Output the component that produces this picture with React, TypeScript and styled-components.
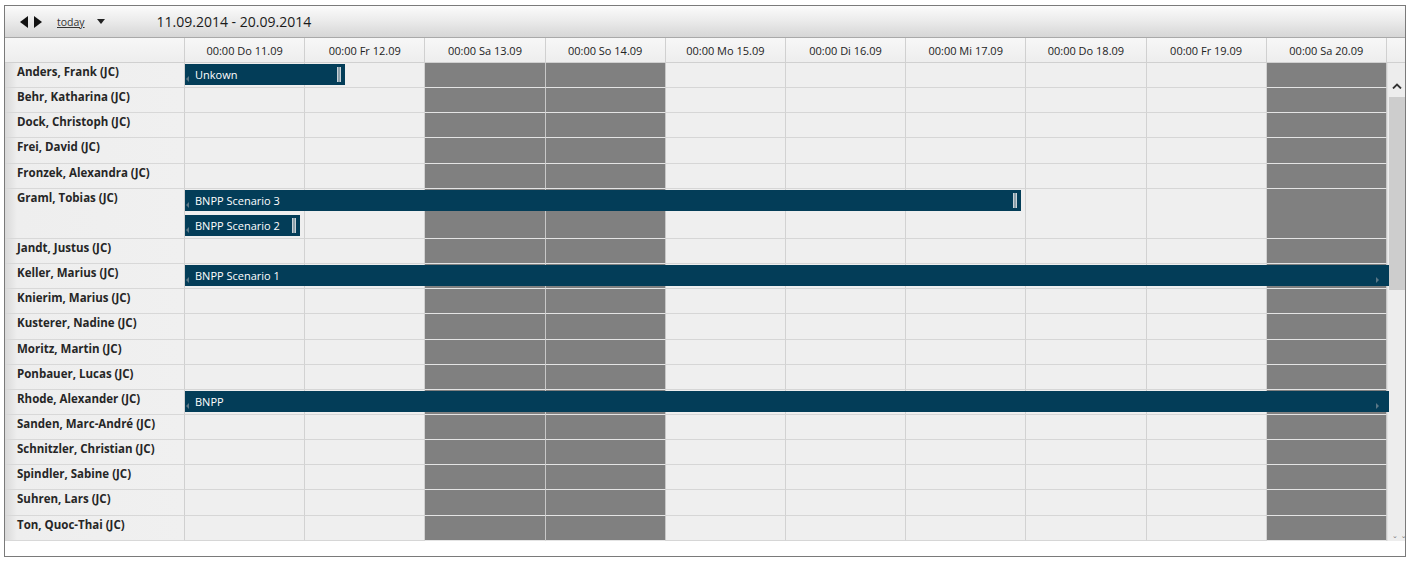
import styled, { createGlobalStyle } from 'styled-components'

const GlobalStyle = createGlobalStyle`
  html, body {
    margin: 0;
    padding: 0;
    background: #ffffff;
  }
  body {
    font-family: "Open Sans", "Noto Sans", "DejaVu Sans", sans-serif;
    color: #1e1e1e;
  }
`

const DAYS = [
  { label: '00:00 Do 11.09', weekend: false },
  { label: '00:00 Fr 12.09', weekend: false },
  { label: '00:00 Sa 13.09', weekend: true },
  { label: '00:00 So 14.09', weekend: true },
  { label: '00:00 Mo 15.09', weekend: false },
  { label: '00:00 Di 16.09', weekend: false },
  { label: '00:00 Mi 17.09', weekend: false },
  { label: '00:00 Do 18.09', weekend: false },
  { label: '00:00 Fr 19.09', weekend: false },
  { label: '00:00 Sa 20.09', weekend: true },
]

const DAY_W = 120.2
const ROW_H = 25.15

type Task = { title: string; start: number; days: number; lane: number }
type Person = { name: string; lanes: number; tasks: Task[] }

const PEOPLE: Person[] = [
  { name: 'Anders, Frank (JC)', lanes: 1, tasks: [{ title: 'Unkown', start: 0, days: 1.33, lane: 0 }] },
  { name: 'Behr, Katharina (JC)', lanes: 1, tasks: [] },
  { name: 'Dock, Christoph (JC)', lanes: 1, tasks: [] },
  { name: 'Frei, David (JC)', lanes: 1, tasks: [] },
  { name: 'Fronzek, Alexandra (JC)', lanes: 1, tasks: [] },
  {
    name: 'Graml, Tobias (JC)',
    lanes: 2,
    tasks: [
      { title: 'BNPP Scenario 3', start: 0, days: 6.955, lane: 0 },
      { title: 'BNPP Scenario 2', start: 0, days: 0.96, lane: 1 },
    ],
  },
  { name: 'Jandt, Justus (JC)', lanes: 1, tasks: [] },
  { name: 'Keller, Marius (JC)', lanes: 1, tasks: [{ title: 'BNPP Scenario 1', start: 0, days: 99, lane: 0 }] },
  { name: 'Knierim, Marius (JC)', lanes: 1, tasks: [] },
  { name: 'Kusterer, Nadine (JC)', lanes: 1, tasks: [] },
  { name: 'Moritz, Martin (JC)', lanes: 1, tasks: [] },
  { name: 'Ponbauer, Lucas (JC)', lanes: 1, tasks: [] },
  { name: 'Rhode, Alexander (JC)', lanes: 1, tasks: [{ title: 'BNPP', start: 0, days: 99, lane: 0 }] },
  { name: 'Sanden, Marc-André (JC)', lanes: 1, tasks: [] },
  { name: 'Schnitzler, Christian (JC)', lanes: 1, tasks: [] },
  { name: 'Spindler, Sabine (JC)', lanes: 1, tasks: [] },
  { name: 'Suhren, Lars (JC)', lanes: 1, tasks: [] },
  { name: 'Ton, Quoc-Thai (JC)', lanes: 1, tasks: [] },
]

const Page = styled.div`
  padding: 5px 6px 0 4px;
`

const Frame = styled.div`
  width: 1400px;
  height: 550px;
  border: 1px solid #7a7a7a;
  display: flex;
  flex-direction: column;
  background: #ffffff;
`

const Toolbar = styled.div`
  flex: none;
  display: flex;
  align-items: center;
  background: linear-gradient(to bottom, #fbfbfb 0%, #ececec 45%, #d6d6d6 100%);
  border-bottom: 1px solid #a9a9a9;
  padding-left: 15px;
  box-sizing: border-box;
  height: 32px;
`

const NavArrows = styled.div`
  display: flex;
  gap: 4px;
  align-items: center;
  width: 37px;
`

const TodayLink = styled.span`
  font-size: 10.5px;
  color: #333;
  text-decoration: underline;
  margin-right: 12px;
`

const Caret = styled.svg`
  margin-right: 52px;
`

const RangeTitle = styled.span`
  font-size: 14px;
  color: #1a1a1a;
`

const Body = styled.div`
  display: flex;
  flex: none;
`

const Rows = styled.div`
  width: ${180 + DAY_W * 10}px;
  display: flex;
  flex-direction: column;
`

const Row = styled.div<{ $lanes: number }>`
  position: relative;
  display: grid;
  grid-template-columns: 180px repeat(10, ${DAY_W}px);
  height: ${(p) => ROW_H * p.$lanes}px;
`

const HeaderRow = styled.div`
  display: grid;
  grid-template-columns: 180px repeat(10, ${DAY_W}px);
  height: 25px;
  background: linear-gradient(to bottom, #f7f7f7, #ededed);
`

const HeaderCorner = styled.div`
  border-right: 1px solid #d0d0d0;
  border-bottom: 1px solid #d0d0d0;
`

const HeaderCell = styled.div`
  border-right: 1px solid #d0d0d0;
  border-bottom: 1px solid #d0d0d0;
  font-size: 11px;
  color: #222;
  display: flex;
  align-items: center;
  justify-content: center;
  box-sizing: border-box;
`

const NameCell = styled.div`
  background: linear-gradient(to right, #d9d9d9 0px, #eeeeee 12px, #f0f0f0 100%);
  border-right: 1px solid #d0d0d0;
  border-bottom: 1px solid #d8d8d8;
  font-size: 11.5px;
  font-weight: 700;
  color: #262626;
  padding: 1px 0 0 12px;
  box-sizing: border-box;
  white-space: nowrap;
`

const DayCell = styled.div<{ $weekend: boolean }>`
  background: ${(p) => (p.$weekend ? '#808080' : '#efefef')};
  border-right: 1px solid ${(p) => (p.$weekend ? '#c8c8c8' : '#d2d2d2')};
  border-bottom: 1px solid ${(p) => (p.$weekend ? '#e4e4e4' : '#d6d6d6')};
  box-sizing: border-box;
`

const Bar = styled.div`
  position: absolute;
  height: 21px;
  background: #033d58;
  color: #ffffff;
  font-size: 11px;
  display: flex;
  align-items: center;
  padding-left: 10px;
  box-sizing: border-box;
  white-space: nowrap;
  overflow: hidden;
  z-index: 1;
`

const LeftTick = styled.span`
  position: absolute;
  left: 1px;
  bottom: 3px;
  width: 0;
  height: 0;
  border-top: 3px solid transparent;
  border-bottom: 3px solid transparent;
  border-right: 3px solid #5b7786;
`

const RightTick = styled.span`
  position: absolute;
  right: 10px;
  bottom: 3px;
  width: 0;
  height: 0;
  border-top: 3px solid transparent;
  border-bottom: 3px solid transparent;
  border-left: 3px solid #5b7786;
`

const Grip = styled.span`
  position: absolute;
  right: 4px;
  top: 3px;
  width: 2px;
  height: 15px;
  border-left: 1px solid #c8d2d8;
  border-right: 1px solid #c8d2d8;
  background: #8da0aa;
`

const ScrollCol = styled.div`
  flex: 1;
  display: flex;
  flex-direction: column;
`

const ScrollHead = styled.div`
  height: 25px;
  background: linear-gradient(to bottom, #f7f7f7, #ededed);
  border-bottom: 1px solid #d0d0d0;
  box-sizing: border-box;
`

const ScrollTrack = styled.div`
  flex: 1;
  background: #ededed;
  display: flex;
  flex-direction: column;
  align-items: center;
  border-left: 1px solid #e2e2e2;
  position: relative;
`

const ScrollBtn = styled.div`
  height: 34px;
  width: 100%;
  display: flex;
  align-items: center;
  justify-content: center;
  padding-top: 12px;
  box-sizing: border-box;
`

const Thumb = styled.div`
  width: 16px;
  height: 193px;
  background: #cdcdcd;
`

const BottomGrip = styled.span`
  position: absolute;
  bottom: 1px;
  left: 4px;
  font-size: 7px;
  color: #777;
  letter-spacing: 3px;
`

const totalLanes = PEOPLE.reduce((s, p) => s + p.lanes, 0)

function BarView({ task }: { task: Task }) {
  const left = 180 + task.start * DAY_W
  const maxW = 180 + DAY_W * 10 + 2 - left
  const rawW = task.days * DAY_W
  const open = rawW > maxW
  const width = open ? maxW : rawW
  return (
    <Bar style={{ left, width, top: 1 + task.lane * ROW_H }}>
      <LeftTick />
      {task.title}
      {open ? <RightTick /> : <Grip />}
    </Bar>
  )
}

export default function App() {
  return (
    <Page>
      <GlobalStyle />
      <Frame>
        <Toolbar>
          <NavArrows>
            <svg width="9" height="12" viewBox="0 0 9 12">
              <path d="M8 0 L8 12 L0 6 Z" fill="#111" />
            </svg>
            <svg width="9" height="12" viewBox="0 0 9 12">
              <path d="M1 0 L1 12 L9 6 Z" fill="#111" />
            </svg>
          </NavArrows>
          <TodayLink>today</TodayLink>
          <Caret width="8" height="5" viewBox="0 0 8 5">
            <path d="M0 0 L8 0 L4 5 Z" fill="#222" />
          </Caret>
          <RangeTitle>11.09.2014 - 20.09.2014</RangeTitle>
        </Toolbar>
        <Body>
          <Rows>
            <HeaderRow>
              <HeaderCorner />
              {DAYS.map((d) => (
                <HeaderCell key={d.label}>{d.label}</HeaderCell>
              ))}
            </HeaderRow>
            {PEOPLE.map((p) => (
              <Row key={p.name} $lanes={p.lanes}>
                <NameCell>{p.name}</NameCell>
                {DAYS.map((d) => (
                  <DayCell key={d.label} $weekend={d.weekend} />
                ))}
                {p.tasks.map((t) => (
                  <BarView key={t.title} task={t} />
                ))}
              </Row>
            ))}
          </Rows>
          <ScrollCol style={{ height: 25 + totalLanes * ROW_H }}>
            <ScrollHead />
            <ScrollTrack>
              <ScrollBtn>
                <svg width="10" height="6" viewBox="0 0 10 6">
                  <path d="M1 5.5 L5 1.5 L9 5.5" fill="none" stroke="#333" strokeWidth="1.8" />
                </svg>
              </ScrollBtn>
              <Thumb />
              <BottomGrip>⌄⌄</BottomGrip>
            </ScrollTrack>
          </ScrollCol>
        </Body>
      </Frame>
    </Page>
  )
}
